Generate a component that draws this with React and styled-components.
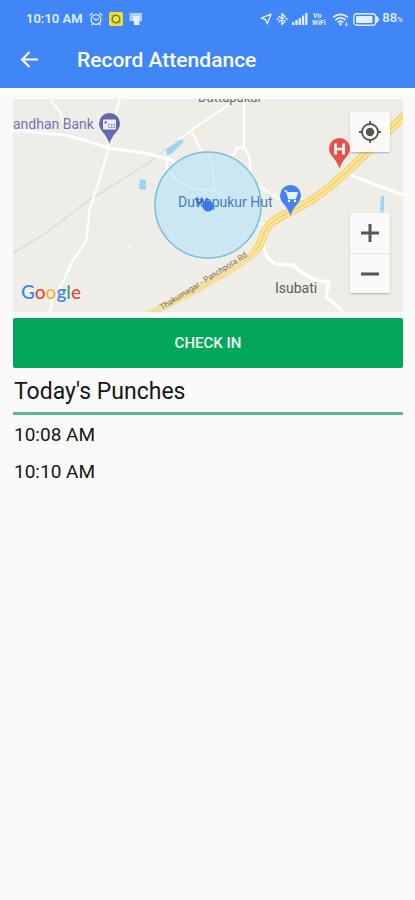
import React from "react";
import styled, { createGlobalStyle } from "styled-components";

const GlobalStyle = createGlobalStyle`
  *, *::before, *::after { box-sizing: border-box; }
  body {
    margin: 0;
    background: #fafafb;
    color: #161616;
    font-family: Roboto, "Liberation Sans", sans-serif;
  }
`;

const Screen = styled.div`
  display: flex;
  flex-direction: column;
  min-height: 100vh;
`;

const Header = styled.header`
  background: #4086f6;
  color: #fff;
  padding-bottom: 6px;
`;

const StatusBar = styled.div`
  display: flex;
  align-items: center;
  justify-content: space-between;
  height: 38px;
  padding: 0 12px 0 26px;
  color: #e4eefd;
`;

const StatusGroup = styled.div`
  display: flex;
  align-items: center;
  gap: ${(p) => p.$gap}px;
  svg { display: block; }
`;

const Clock = styled.time`
  font-size: 13px;
  line-height: 16px;
  font-weight: 600;
`;

const BatteryLevel = styled.span`
  font-size: 13px;
  line-height: 16px;
  font-weight: 500;
  small { font-size: 8px; }
`;

const BatteryGroup = styled.div`
  display: flex;
  align-items: center;
  gap: 2px;
`;

const Toolbar = styled.div`
  display: flex;
  align-items: center;
  gap: 35px;
  height: 44px;
  padding: 0 16px 0 17px;
`;

const BackButton = styled.button`
  display: flex;
  width: 25px;
  padding: 0;
  border: 0;
  background: none;
  color: inherit;
  cursor: pointer;
`;

const Title = styled.h1`
  margin: 0;
  font-size: 21px;
  line-height: 28px;
  font-weight: 500;
`;

const Content = styled.main`
  display: flex;
  flex-direction: column;
  padding: 11px 12px 0 13px;
`;

const MapFrame = styled.section`
  position: relative;
  height: 213px;
  overflow: hidden;
  background: #efede8;
`;

const MapCanvas = styled.svg`
  display: block;
  width: 100%;
  height: 100%;
  font-family: Roboto, "Liberation Sans", sans-serif;
`;

const MapControls = styled.div`
  position: absolute;
  top: 13px;
  right: 13px;
  bottom: 19px;
  display: flex;
  flex-direction: column;
  justify-content: space-between;
`;

const ControlGroup = styled.div`
  display: flex;
  flex-direction: column;
  background: rgba(252, 251, 250, 0.92);
  border-radius: 2px;
  box-shadow: 0 1px 2px rgba(0, 0, 0, 0.28);
`;

const MapButton = styled.button`
  display: flex;
  align-items: center;
  justify-content: center;
  width: 40px;
  height: 40px;
  padding: 0;
  border: 0;
  background: none;
  color: #555;
  cursor: pointer;
  & + & { border-top: 1px solid #e6e4e2; }
`;

const CheckInButton = styled.button`
  height: 50px;
  margin-top: 6px;
  border: 0;
  border-radius: 2px;
  background: #03a65a;
  color: #f0fbf5;
  font-family: inherit;
  font-size: 15px;
  font-weight: 500;
  cursor: pointer;
`;

const SectionTitle = styled.h2`
  margin: 0;
  padding: 10px 1px 6px;
  border-bottom: 3px solid #60b58c;
  font-size: 23px;
  line-height: 28px;
  font-weight: 400;
`;

const PunchList = styled.ul`
  list-style: none;
  margin: 0;
  padding: 6px 0 0;
`;

const Punch = styled.li`
  padding: 1px 1px 9px;
  border-bottom: 1px solid #f0f4f6;
  font-size: 19px;
  line-height: 26px;
`;

const AlarmIcon = () => (
  <svg width="14" height="14" viewBox="0 0 14 14" fill="none" stroke="currentColor" strokeWidth="1.2" strokeLinecap="round">
    <circle cx="7" cy="7.5" r="4.9" />
    <path d="M1 3.2 3.2 1.3M13 3.2 10.8 1.3M4.8 6.5 7 8.3 9.3 6.7M3.5 11.5 2.6 12.8M10.5 11.5l.9 1.3" />
  </svg>
);

const RecorderIcon = () => (
  <svg width="14" height="14" viewBox="0 0 14 14">
    <rect width="14" height="14" rx="2" fill="#f1df35" />
    <circle cx="7" cy="7" r="3.8" fill="#f0e255" stroke="#76842f" strokeWidth="1.6" />
    <path d="M2.5 3.5h2M9.5 10.5h2" stroke="#9a972f" />
  </svg>
);

const AppNoticeIcon = () => (
  <svg width="14" height="14" viewBox="0 0 14 14" fill="currentColor">
    <path d="M.5 1h12.500v8H.5z" fillOpacity=".7" />
    <path d="M4 4h6.500v9H5V10L4 9z" />
  </svg>
);

const LocationIcon = () => (
  <svg width="12" height="12" viewBox="0 0 12 12" fill="none" stroke="currentColor" strokeWidth="1.3" strokeLinejoin="round">
    <path d="M11 1 7.2 11 5.6 6.5 1 5.2z" />
  </svg>
);

const BluetoothIcon = () => (
  <svg width="12" height="14" viewBox="0 0 12 14" fill="none" stroke="currentColor" strokeWidth="1.3" strokeLinejoin="round">
    <path d="m2.5 4 6.5 5.5L5.8 12.5v-11L9 4.5 2.5 10" />
    <path d="M1 7h1.4M9.8 7h1.4" strokeLinecap="round" />
  </svg>
);

const SignalIcon = () => (
  <svg width="16" height="12" viewBox="0 0 16 12" fill="currentColor">
    <rect x="0" y="9" width="2.3" height="3" rx=".6" />
    <rect x="3.3" y="7" width="2.3" height="5" rx=".6" />
    <rect x="6.6" y="5" width="2.3" height="7" rx=".6" />
    <rect x="9.9" y="2.5" width="2.3" height="9.5" rx=".6" />
    <rect x="13.2" y="0" width="2.3" height="12" rx=".6" />
  </svg>
);

const VoWifiIcon = () => (
  <svg width="16" height="14" viewBox="0 0 16 14" fill="currentColor" fontFamily="Roboto, sans-serif" fontWeight="700">
    <text x="1" y="6" fontSize="7">Vo</text>
    <text x="0" y="13" fontSize="7">WiFi</text>
  </svg>
);

const WifiIcon = () => (
  <svg width="17" height="13" viewBox="0 0 17 13" fill="none" stroke="currentColor" strokeWidth="1.7">
    <path d="M1 4.4Q8.5-1.8 16 4.4M3.4 7q5.1-4.3 10.2 0M5.8 9.4q2.7-2.3 5.4 0" />
    <path d="m8.5 12.8-1.9-2.1q1.9-1.4 3.8 0z" fill="currentColor" stroke="none" />
    <path d="M14.4 9v4M13 11.6l1.4 1.4 1.4-1.4" strokeWidth="1" />
  </svg>
);

const BatteryIcon = () => (
  <svg width="27" height="13" viewBox="0 0 27 13">
    <rect x=".8" y=".8" width="21.8" height="11.4" rx="3" fill="none" stroke="currentColor" strokeWidth="1.4" />
    <rect x="3" y="3" width="16.5" height="7" rx="1" fill="currentColor" />
    <path d="M23.5 3 26 6.5 23.5 10z" fill="currentColor" stroke="currentColor" strokeLinejoin="round" />
  </svg>
);

const BackIcon = () => (
  <svg width="25" height="24" viewBox="0 0 25 24" fill="none" stroke="currentColor" strokeWidth="2.1">
    <path d="M21 11.500H5.500M12.500 4 5 11.500 12.500 19" />
  </svg>
);

const TargetIcon = () => (
  <svg width="24" height="24" viewBox="0 0 24 24" fill="none" stroke="currentColor" strokeWidth="1.8">
    <circle cx="12" cy="12" r="8" />
    <circle cx="12" cy="12" r="4.2" fill="currentColor" stroke="none" />
    <path d="M12 1v3.5M12 19.5V23M1 12h3.5M19.5 12H23" />
  </svg>
);

const PlusIcon = () => (
  <svg width="18" height="18" viewBox="0 0 18 18" stroke="currentColor" strokeWidth="3">
    <path d="M9 0v18M0 9h18" />
  </svg>
);

const MinusIcon = () => (
  <svg width="18" height="18" viewBox="0 0 18 18" stroke="currentColor" strokeWidth="3">
    <path d="M0 9h18" />
  </svg>
);

const lowerRoad = "M146 315C170 305 190 293 212 281C232 269 250 259 256 250";
const upperRoad = "M254 252C264 244 261 234 269 225C280 214 299 209 315 198C331 187 339 179 355 164C371 149 388 131 408 112";

const AreaMap = () => (
  <MapCanvas viewBox="13 99 390 213" preserveAspectRatio="xMidYMid slice" role="img" aria-label="Map of your location">
    <rect x="-200" y="0" width="1000" height="500" fill="#efede8" />
    <path d="M194 131 202 124 209 128 205 136 198 137Z" fill="#f4ecd4" />

    <g fill="none" stroke="#e0dddb" strokeWidth="1.8">
      <path d="M10 255 46 233 88 201 150 162 166 149" />
    </g>
    <g fill="none" stroke="#fff" strokeLinejoin="round">
      <path d="M10 130 65 135 87 141 109 148 145 153 168 159 178 163" strokeWidth="3" />
      <path d="M166 158 168 171" strokeWidth="2" />
      <path d="M51 100 60 112 67 130" strokeWidth="2" />
      <path d="M120 98 113 125 108 151 99 181 90 208 86 241 73 260 63 282 53 299 49 314" strokeWidth="2.2" />
      <path d="M192 132 201 151M178 140 192 130 231 103" strokeWidth="1.8" />
      <path d="M244 98 244 147 236 148 235 154 224 157M244 147l5 9 2 20 6 9 12 7 10 7h42" strokeWidth="2" />
      <path d="M241 216 252 222 266 224" strokeWidth="2.4" />
      <path d="M345 172 363 180 382 187 406 196" strokeWidth="3" />
      <path d="M263 245 267 257 275 264 293 265 304 274 315 280 329 282 326 297 337 306 345 314" strokeWidth="3.4" />
    </g>

    <path d="m166 149 15-10 3 3-13 12-4 1zM140 179l6 1v10l-7-1zM381 196h3v14l-2 4-2-5z" fill="#9fd3f2" />
    <circle cx="130" cy="246" r="2" fill="#f8f6f3" />

    <path d={lowerRoad} fill="none" stroke="#f5dfa0" strokeWidth="7" />
    <path d={upperRoad} fill="none" stroke="#f0d27f" strokeWidth="8.5" />
    <path d={upperRoad} fill="none" stroke="#fde694" strokeWidth="6" />
    <path d={upperRoad} fill="none" stroke="#f3cf73" strokeWidth="1.4" />

    <circle cx="208" cy="205" r="53" fill="#c2e5f6" fillOpacity=".8" stroke="#7dbfda" strokeWidth="1.6" />
    <path d="M170 173 181 184 196 189 214 190 226 198M209 156 213 170 214 190" fill="none" stroke="#d8eff9" strokeWidth="1.8" />

    <text x="198" y="102" fontSize="13" fill="#686868">Duttapukur</text>
    <text x="13" y="129" fontSize="14" fill="#7374b7">andhan Bank</text>
    <text x="178" y="207" fontSize="14" fill="#477dbc">Duttapukur Hut</text>
    <text x="275" y="293" fontSize="14" fill="#5c5c5c">Isubati</text>
    <text fontSize="8" fill="#806e4b" transform="translate(162 310) rotate(-32)">Thakurnagar - Panchpota Rd</text>

    <path d="M109.500 144C107 134 99 131 99 123.500a10.500 10.500 0 0 1 21 0C120 131 112 134 109.500 144Z" fill="#6268b4" />
    <rect x="103" y="119.500" width="13" height="10" rx="1" fill="#eeeffa" />
    <path d="M104.500 121.500h2.500v2h-2.500z" fill="#6268b4" />
    <path d="M108 124.500h7M108 127.500h7M108.500 124.500v3M111.500 124.500v3M114.500 124.500v3" stroke="#a4a6d6" fill="none" />

    <path d="M290.500 216C288 206 280 203 280 195.500a10.500 10.500 0 0 1 21 0C301 203 293 206 290.500 216Z" fill="#4283ee" />
    <path d="M284.500 191h2l2.300 7.500h6.500l1.800-5.700h-9.800" fill="#eaf2ff" stroke="#eaf2ff" strokeWidth="1.4" />
    <circle cx="289" cy="201" r="1.200" fill="#fff" />
    <circle cx="295" cy="201" r="1.200" fill="#fff" />

    <path d="M339.500 169C337 159 329 156 329 148.500a10.500 10.500 0 0 1 21 0C350 156 342 159 339.500 169Z" fill="#e2534c" />
    <path d="M335.500 143.500v11M343.500 143.500v11M335.500 149h8" stroke="#fff" strokeWidth="2.600" />

    <path d="m196 198 3 6 3-4 3 4 2-6" fill="none" stroke="#376fc1" strokeWidth="2" />
    <circle cx="208" cy="206" r="5.500" fill="#3979ed" />

    <text x="21" y="299" fontFamily="Lato, sans-serif" fontSize="19" fontWeight="600" stroke="#fff" strokeWidth="1" paintOrder="stroke">
      <tspan fill="#4285e8">G</tspan>
      <tspan fill="#df4c44">o</tspan>
      <tspan fill="#edb52c">o</tspan>
      <tspan fill="#4285e8">g</tspan>
      <tspan fill="#42a565">l</tspan>
      <tspan fill="#df4c44">e</tspan>
    </text>
  </MapCanvas>
);

const punches = ["10:08 AM", "10:10 AM"];

export default function App() {
  return (
    <Screen>
      <GlobalStyle />
      <Header>
        <StatusBar>
          <StatusGroup $gap={6}>
            <Clock>10:10 AM</Clock>
            <AlarmIcon />
            <RecorderIcon />
            <AppNoticeIcon />
          </StatusGroup>
          <StatusGroup $gap={4}>
            <LocationIcon />
            <BluetoothIcon />
            <SignalIcon />
            <VoWifiIcon />
            <WifiIcon />
            <BatteryGroup>
              <BatteryIcon />
              <BatteryLevel>88<small>%</small></BatteryLevel>
            </BatteryGroup>
          </StatusGroup>
        </StatusBar>
        <Toolbar>
          <BackButton type="button" aria-label="Back"><BackIcon /></BackButton>
          <Title>Record Attendance</Title>
        </Toolbar>
      </Header>
      <Content>
        <MapFrame>
          <AreaMap />
          <MapControls>
            <ControlGroup>
              <MapButton type="button" aria-label="My location"><TargetIcon /></MapButton>
            </ControlGroup>
            <ControlGroup>
              <MapButton type="button" aria-label="Zoom in"><PlusIcon /></MapButton>
              <MapButton type="button" aria-label="Zoom out"><MinusIcon /></MapButton>
            </ControlGroup>
          </MapControls>
        </MapFrame>
        <CheckInButton type="button">CHECK IN</CheckInButton>
        <SectionTitle>Today's Punches</SectionTitle>
        <PunchList>
          {punches.map((time) => (
            <Punch key={time}><time>{time}</time></Punch>
          ))}
        </PunchList>
      </Content>
    </Screen>
  );
}
